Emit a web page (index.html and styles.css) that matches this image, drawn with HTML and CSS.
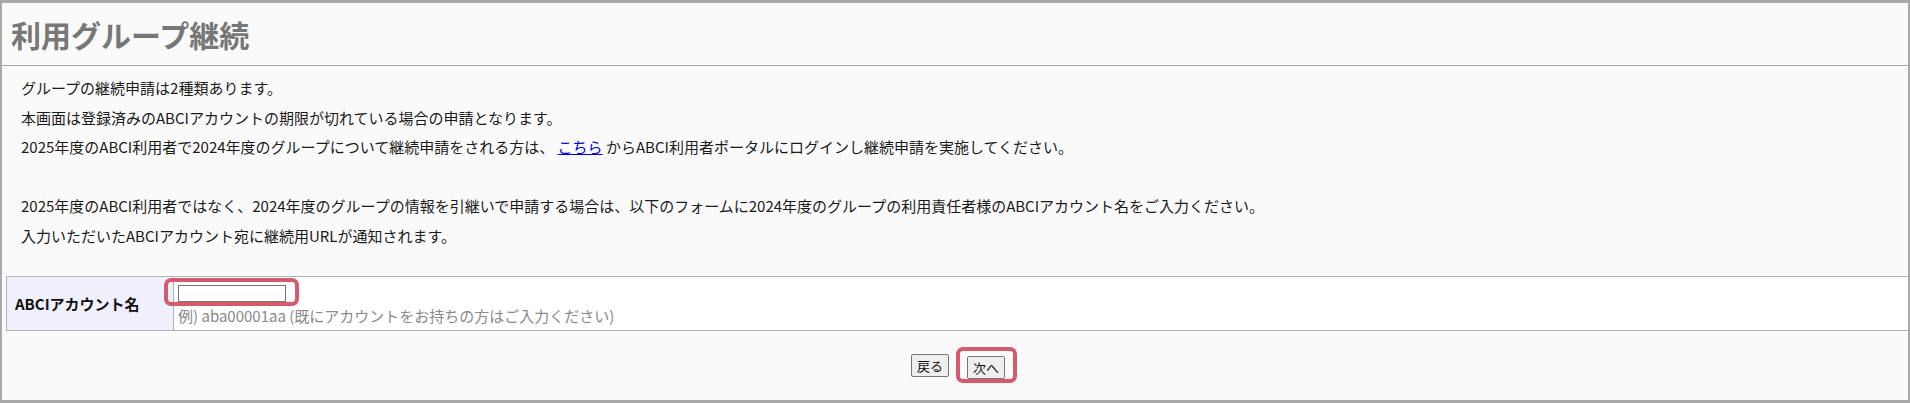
FILE: index.html
```html
<!DOCTYPE html>
<html lang="ja">
<head>
<meta charset="utf-8">
<title>利用グループ継続</title>
<link rel="stylesheet" href="styles.css">
</head>
<body>
<div class="panel">
  <h1 class="title">利用グループ継続</h1>
  <div class="intro">
    <p>グループの継続申請は2種類あります。</p>
    <p>本画面は登録済みのABCIアカウントの期限が切れている場合の申請となります。</p>
    <p>2025年度のABCI利用者で2024年度のグループについて継続申請をされる方は、 <a href="#" class="link">こちら</a> からABCI利用者ポータルにログインし継続申請を実施してください。</p>
    <p class="blank">&nbsp;</p>
    <p>2025年度のABCI利用者ではなく、2024年度のグループの情報を引継いで申請する場合は、以下のフォームに2024年度のグループの利用責任者様のABCIアカウント名をご入力ください。</p>
    <p>入力いただいたABCIアカウント宛に継続用URLが通知されます。</p>
  </div>
  <table class="form">
    <tr>
      <th class="label">ABCIアカウント名</th>
      <td class="field">
        <div class="mark-wrap input-wrap"><input type="text" class="text-input"><span class="mark mark-input"></span></div>
        <div class="hint">例) aba00001aa (既にアカウントをお持ちの方はご入力ください)</div>
      </td>
    </tr>
  </table>
  <div class="actions">
    <button class="btn" type="button">戻る</button>
    <span class="mark-wrap"><button class="btn" type="button">次へ</button><span class="mark mark-btn"></span></span>
  </div>
</div>
</body>
</html>
```

FILE: styles.css
```css
html, body {
  margin: 0;
  padding: 0;
  background: #ffffff;
}
body {
  font-family: "Noto Sans CJK JP", "Noto Sans", sans-serif;
  color: #1a1a1a;
}
.panel {
  width: 1910px;
  height: 403px;
  box-sizing: border-box;
  border-style: solid;
  border-color: #a9a9ac;
  border-width: 3px 2px 3px 2px;
  background: #fafafa;
  display: flex;
  flex-direction: column;
}
.title {
  margin: 0;
  height: 63px;
  box-sizing: border-box;
  border-bottom: 1px solid #a4a4a4;
  padding: 0 0 0 9px;
  display: flex;
  align-items: center;
  font-size: 30px;
  font-weight: 700;
  color: #777777;
  line-height: 1;
}
.intro {
  padding: 7px 0 0 19px;
  font-size: 15px;
  line-height: 29.5px;
}
.intro p {
  margin: 0;
}
.link {
  color: #0000ee;
  text-decoration: underline;
}
.form {
  margin: 26px 0 0 4px;
  width: calc(100% - 4px);
  border-collapse: collapse;
  background: #ffffff;
}
.form th, .form td {
  border: 1px solid #b4b4b8;
}
.form tr > :last-child {
  border-right: none;
}
.label {
  width: 167px;
  box-sizing: border-box;
  background: #f0f0fc;
  text-align: left;
  padding: 0 0 0 8px;
  font-size: 15px;
  font-weight: 700;
  color: #111111;
}
.field {
  height: 54px;
  padding: 8px 0 0 4px;
  vertical-align: top;
  box-sizing: border-box;
}
.mark-wrap {
  position: relative;
  display: inline-block;
  vertical-align: top;
}
.input-wrap {
  display: block;
  width: 108px;
}
.text-input {
  display: block;
  width: 108px;
  height: 17px;
  box-sizing: border-box;
  border: 1px solid #767676;
  margin: 0;
  padding: 0;
  background: #ffffff;
}
.hint {
  font-size: 15px;
  color: #8a8a8a;
  line-height: 20px;
  margin-top: 4px;
}
.mark {
  position: absolute;
  border: 4px solid #d65a6b;
  border-radius: 7px;
  pointer-events: none;
}
.mark-input {
  left: -14px;
  top: -7px;
  right: -13px;
  bottom: -4px;
}
.mark-btn {
  left: -11px;
  top: -7px;
  right: -12px;
  bottom: -4px;
}
.actions {
  display: flex;
  justify-content: center;
  gap: 18px;
  padding-top: 23px;
  padding-left: 6px;
}
.btn {
  height: 23px;
  width: 38px;
  box-sizing: border-box;
  padding: 0;
  margin: 0;
  font-family: "Noto Sans CJK JP", sans-serif;
  font-size: 13px;
  line-height: 1;
  color: #111111;
  background: #efefef;
  border: 1px solid #767676;
  border-radius: 2px;
}
```
